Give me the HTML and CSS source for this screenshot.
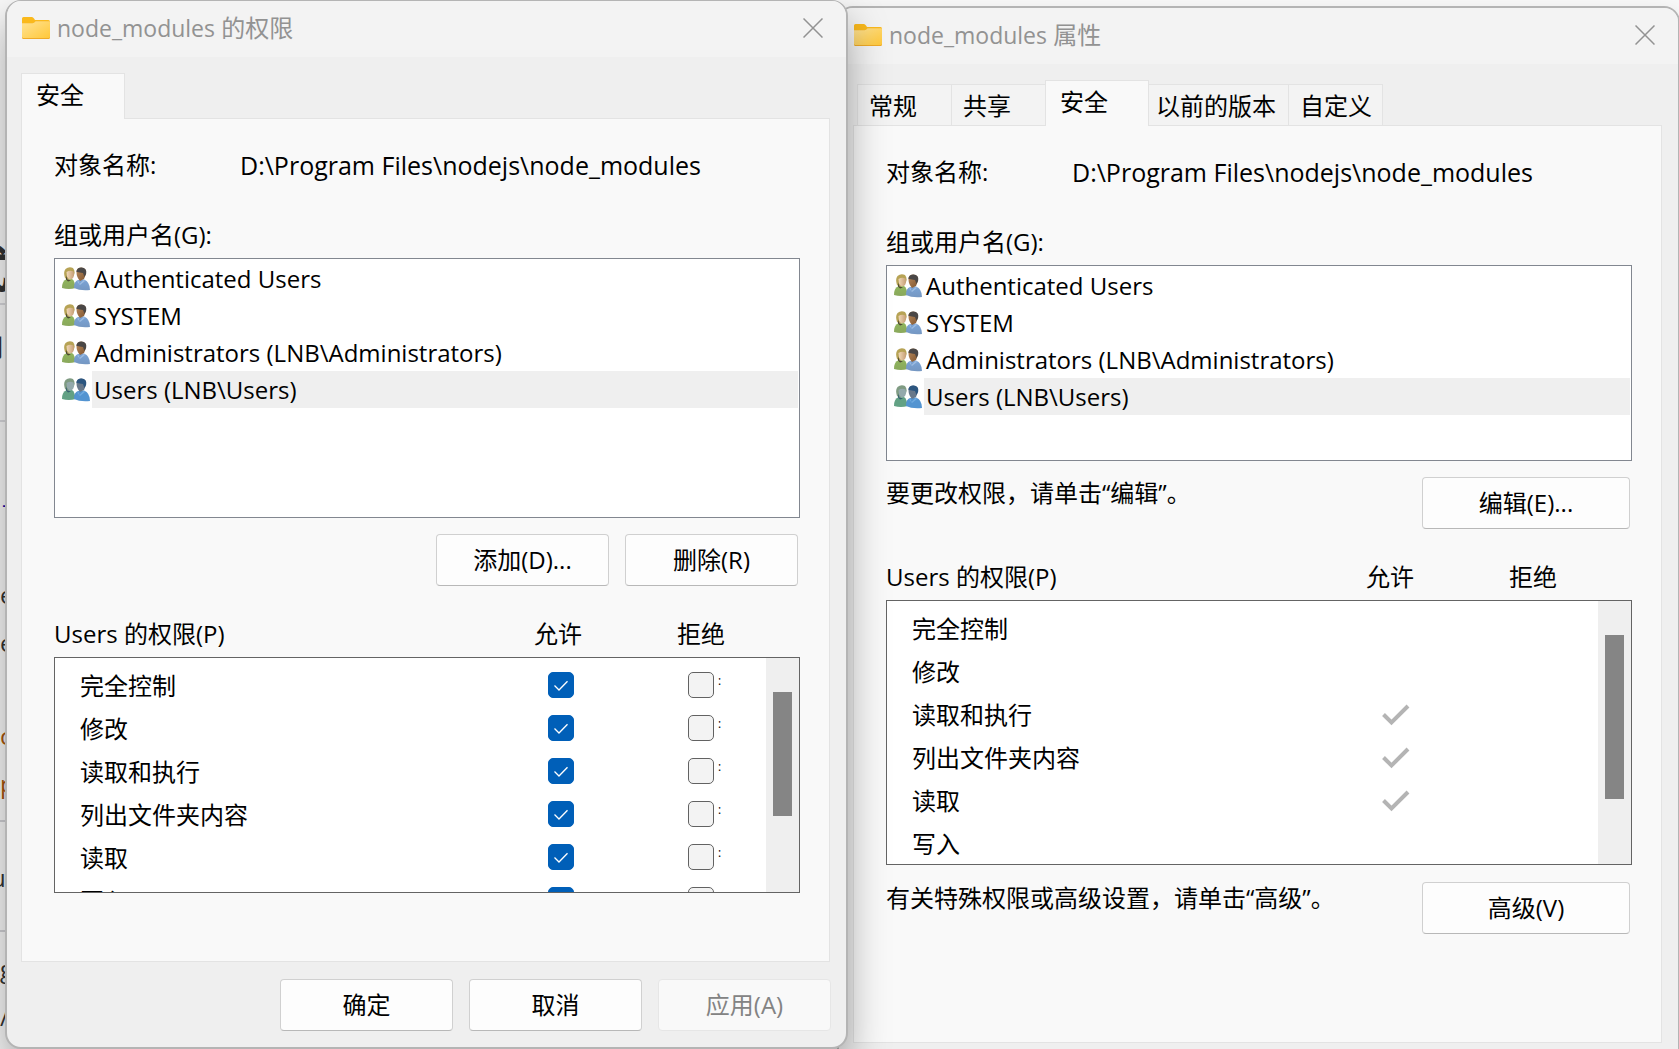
FILE: index.html
```html
<!DOCTYPE html>
<html lang="zh-CN">
<head>
<meta charset="utf-8">
<title>node_modules 的权限</title>
<link rel="stylesheet" href="styles.css">
</head>
<body>
<svg class="defs" aria-hidden="true">
  <defs>
    <linearGradient id="g-folder" x1="0" y1="0" x2="1" y2="1"><stop offset="0" stop-color="#ffe394"/><stop offset="1" stop-color="#ffc83a"/></linearGradient>
    <linearGradient id="g-green" x1="0" y1="0" x2="0" y2="1"><stop offset="0" stop-color="#8fb55c"/><stop offset="1" stop-color="#8aa85c"/></linearGradient>
    <linearGradient id="g-blue" x1="0" y1="0" x2="0" y2="1"><stop offset="0" stop-color="#7ba4d6"/><stop offset="1" stop-color="#7597c2"/></linearGradient>
    <linearGradient id="g-skin" x1="0" y1="0" x2="1" y2="0"><stop offset="0" stop-color="#f0d8b8"/><stop offset="1" stop-color="#c79f76"/></linearGradient>
    <linearGradient id="g-tan" x1="0" y1="0" x2="1" y2="1"><stop offset="0" stop-color="#b98a5c"/><stop offset="1" stop-color="#80552f"/></linearGradient>
  </defs>
  <symbol id="folder" viewBox="0 0 28 22">
    <path d="M0 1.5Q0 0 1.500 0H10Q11 0 12 1.500L13 3H26.500Q28 3 28 4.500V8H0Z" fill="#fab91c"/>
    <path d="M0 6.300H10.500Q11.500 6.300 12.300 5.500L13.600 4.200H28V20.500Q28 22 26.500 22H1.500Q0 22 0 20.500Z" fill="#efaa28"/>
    <path d="M0 6.300H10.500Q11.500 6.300 12.300 5.500L13.600 4.200H28V19.700Q28 21 26.500 21H1.500Q0 21 0 19.700Z" fill="url(#g-folder)"/>
  </symbol>
  <symbol id="people" viewBox="0 0 28 24">
    <path d="M0 21Q0 14 4 12.500L10 12Q13 14 13.500 21Q7 22.800 0 21Z" fill="url(#g-green)"/>
    <path d="M3 11Q1 5 3.500 2Q7-1 11 1Q13.500 4 12 8L10 11L6 13Z" fill="#b7a355"/>
    <path d="M4.500 5Q8 3 11.500 4.500Q13 9 10 12Q6.500 13 5 9.500Z" fill="url(#g-skin)"/>
    <path d="M4 8.500L5.500 12.500L9 13.500L6 14.500L4 12.500Z" fill="#4b4632"/>
    <path d="M12 21Q12 14 16 13L22 12.500Q28 15 28 23Q18 24 12 21Z" fill="url(#g-blue)"/>
    <path d="M14.500 5.500Q14 1 19 .600Q25 1 24 7L22 12L18 14Q14.500 10 14.500 5.500Z" fill="url(#g-tan)"/>
    <path d="M14.300 4.800Q15 .600 19.500.500Q25 1 24.200 6.500L22.500 10L21 6Q18 5.500 14.300 4.800Z" fill="#4a4746"/>
    <path d="M16 13L17.500 17L22 12.500L23 14L18 18L15.500 15Z" fill="#9dbce2"/>
  </symbol>
  <symbol id="people-selected" viewBox="0 0 28 24">
    <path d="M0 21Q0 14 4 12.500L10 12Q13 14 13.500 21Q7 22.800 0 21Z" fill="#62a184"/>
    <path d="M3 11Q1 5 3.500 2Q7-1 11 1Q13.500 4 12 8L10 11L6 13Z" fill="#7f9b82"/>
    <path d="M4.500 5Q8 3 11.500 4.500Q13 9 10 12Q6.500 13 5 9.500Z" fill="#94a9ac"/>
    <path d="M4 8.500L5.500 12.500L9 13.500L6 14.500L4 12.500Z" fill="#365f70"/>
    <path d="M12 21Q12 14 16 13L22 12.500Q28 15 28 23Q18 24 12 21Z" fill="#5394d1"/>
    <path d="M14.500 5.500Q14 1 19 .600Q25 1 24 7L22 12L18 14Q14.500 10 14.500 5.500Z" fill="#68788a"/>
    <path d="M14.300 4.800Q15 .600 19.500.500Q25 1 24.200 6.500L22.500 10L21 6Q18 5.500 14.300 4.800Z" fill="#2c5680"/>
    <path d="M16 13L17.500 17L22 12.500L23 14L18 18L15.500 15Z" fill="#71abe0"/>
  </symbol>
  <symbol id="close" viewBox="0 0 20 20"><path d="M.5.5L19.500 19.500M19.500.5L.5 19.500" stroke="#929292" stroke-width="1.500" fill="none"/></symbol>
  <symbol id="mark" viewBox="0 0 26 26"><path d="M6.500 13.500L11 18L19.500 9.300" stroke="#fff" stroke-width="1.300" fill="none"/></symbol>
  <symbol id="tick" viewBox="0 0 30 22"><path d="M3.500 10.500L11.500 18.500L28 2" stroke="#b4b4b4" stroke-width="4" fill="none"/></symbol>
</svg>

<main class="desktop">
  <div class="backdrop" aria-hidden="true">
    <span class="scrap scrap-title">式</span>
    <span class="scrap scrap-rule">们</span>
    <span class="scrap scrap-link">-</span>
    <span class="scrap">e</span>
    <span class="scrap scrap-line">e</span>
    <span class="scrap scrap-code">c</span>
    <span class="scrap scrap-code-next">p</span>
    <span class="scrap scrap-item">u</span>
    <span class="scrap scrap-last">g</span>
    <span class="scrap scrap-line">/</span>
  </div>

  <section class="window window-front" aria-labelledby="title-perm">
    <header class="titlebar">
      <svg class="folder"><use href="#folder"/></svg>
      <h1 class="title" id="title-perm"><span class="title-latin">node_modules</span> 的权限</h1>
      <button class="close" type="button" aria-label="关闭"><svg><use href="#close"/></svg></button>
    </header>
    <div class="body">
      <div class="tabs" role="tablist">
        <button class="tab tab-active" type="button" role="tab" aria-selected="true">安全</button>
      </div>
      <div class="panel">
        <div class="object"><span class="object-label">对象名称:</span><span class="path">D:\Program Files\nodejs\node_modules</span></div>
        <div class="caption" id="groups-1">组或用户名(G):</div>
        <ul class="users" aria-labelledby="groups-1">
          <li class="user"><svg><use href="#people"/></svg><span class="user-name">Authenticated Users</span></li>
          <li class="user"><svg><use href="#people"/></svg><span class="user-name">SYSTEM</span></li>
          <li class="user"><svg><use href="#people"/></svg><span class="user-name">Administrators (LNB\Administrators)</span></li>
          <li class="user user-selected"><svg><use href="#people-selected"/></svg><span class="user-name">Users (LNB\Users)</span></li>
        </ul>
        <div class="actions">
          <button class="button" type="button">添加(D)...</button>
          <button class="button" type="button">删除(R)</button>
        </div>
        <div class="perm-head"><span class="perm-title" id="perm-1">Users 的权限(P)</span><span class="head-allow">允许</span><span class="head-deny">拒绝</span></div>
        <div class="perm-box">
          <table class="perms" aria-labelledby="perm-1">
            <tbody>
              <tr><th scope="row">完全控制</th><td class="allow"><label class="check"><input type="checkbox" checked aria-label="允许 完全控制"><svg><use href="#mark"/></svg></label></td><td class="deny"><label class="check-row"><input type="checkbox" aria-label="拒绝 完全控制"><span>:</span></label></td></tr>
              <tr><th scope="row">修改</th><td class="allow"><label class="check"><input type="checkbox" checked aria-label="允许 修改"><svg><use href="#mark"/></svg></label></td><td class="deny"><label class="check-row"><input type="checkbox" aria-label="拒绝 修改"><span>:</span></label></td></tr>
              <tr><th scope="row">读取和执行</th><td class="allow"><label class="check"><input type="checkbox" checked aria-label="允许 读取和执行"><svg><use href="#mark"/></svg></label></td><td class="deny"><label class="check-row"><input type="checkbox" aria-label="拒绝 读取和执行"><span>:</span></label></td></tr>
              <tr><th scope="row">列出文件夹内容</th><td class="allow"><label class="check"><input type="checkbox" checked aria-label="允许 列出文件夹内容"><svg><use href="#mark"/></svg></label></td><td class="deny"><label class="check-row"><input type="checkbox" aria-label="拒绝 列出文件夹内容"><span>:</span></label></td></tr>
              <tr><th scope="row">读取</th><td class="allow"><label class="check"><input type="checkbox" checked aria-label="允许 读取"><svg><use href="#mark"/></svg></label></td><td class="deny"><label class="check-row"><input type="checkbox" aria-label="拒绝 读取"><span>:</span></label></td></tr>
              <tr><th scope="row">写入</th><td class="allow"><label class="check"><input type="checkbox" checked aria-label="允许 写入"><svg><use href="#mark"/></svg></label></td><td class="deny"><label class="check-row"><input type="checkbox" aria-label="拒绝 写入"><span>:</span></label></td></tr>
            </tbody>
          </table>
          <div class="track"><div class="thumb"></div></div>
        </div>
      </div>
      <footer class="footer">
        <button class="button" type="button">确定</button>
        <button class="button" type="button">取消</button>
        <button class="button" type="button" disabled>应用(A)</button>
      </footer>
    </div>
  </section>

  <section class="window window-back" aria-labelledby="title-prop">
    <header class="titlebar">
      <svg class="folder"><use href="#folder"/></svg>
      <h1 class="title" id="title-prop"><span class="title-latin">node_modules</span> 属性</h1>
      <button class="close" type="button" aria-label="关闭"><svg><use href="#close"/></svg></button>
    </header>
    <div class="body">
      <div class="tabs tabs-inset" role="tablist">
        <button class="tab tab-wide" type="button" role="tab">常规</button>
        <button class="tab tab-wide" type="button" role="tab">共享</button>
        <button class="tab tab-active" type="button" role="tab" aria-selected="true">安全</button>
        <button class="tab tab-snug" type="button" role="tab">以前的版本</button>
        <button class="tab" type="button" role="tab">自定义</button>
      </div>
      <div class="panel">
        <div class="object"><span class="object-label">对象名称:</span><span class="path">D:\Program Files\nodejs\node_modules</span></div>
        <div class="caption" id="groups-2">组或用户名(G):</div>
        <ul class="users users-short" aria-labelledby="groups-2">
          <li class="user"><svg><use href="#people"/></svg><span class="user-name">Authenticated Users</span></li>
          <li class="user"><svg><use href="#people"/></svg><span class="user-name">SYSTEM</span></li>
          <li class="user"><svg><use href="#people"/></svg><span class="user-name">Administrators (LNB\Administrators)</span></li>
          <li class="user user-selected"><svg><use href="#people-selected"/></svg><span class="user-name">Users (LNB\Users)</span></li>
        </ul>
        <div class="hint-row"><p class="hint">要更改权限，请单击“编辑”。</p><button class="button button-wide" type="button">编辑(E)...</button></div>
        <div class="perm-head"><span class="perm-title" id="perm-2">Users 的权限(P)</span><span class="head-allow">允许</span><span class="head-deny">拒绝</span></div>
        <div class="perm-box perm-box-tall">
          <table class="perms" aria-labelledby="perm-2">
            <tbody>
              <tr><th scope="row">完全控制</th><td class="allow"></td><td class="deny"></td></tr>
              <tr><th scope="row">修改</th><td class="allow"></td><td class="deny"></td></tr>
              <tr><th scope="row">读取和执行</th><td class="allow"><svg class="tick" role="img" aria-label="是"><use href="#tick"/></svg></td><td class="deny"></td></tr>
              <tr><th scope="row">列出文件夹内容</th><td class="allow"><svg class="tick" role="img" aria-label="是"><use href="#tick"/></svg></td><td class="deny"></td></tr>
              <tr><th scope="row">读取</th><td class="allow"><svg class="tick" role="img" aria-label="是"><use href="#tick"/></svg></td><td class="deny"></td></tr>
              <tr><th scope="row">写入</th><td class="allow"></td><td class="deny"></td></tr>
            </tbody>
          </table>
          <div class="track"><div class="thumb thumb-long"></div></div>
        </div>
        <div class="hint-row"><p class="hint">有关特殊权限或高级设置，请单击“高级”。</p><button class="button button-wide" type="button">高级(V)</button></div>
      </div>
    </div>
  </section>
</main>
</body>
</html>
```

FILE: styles.css
```css
* { box-sizing: border-box; }

body {
  margin: 0;
  background: #f8f8f8;
  color: #000;
  font-family: "Open Sans", "Noto Sans CJK SC", sans-serif;
  font-size: 24px;
  line-height: 32px;
}

button, input { font: inherit; color: inherit; margin: 0; }

.defs { position: absolute; width: 0; height: 0; }

.path { font-size: 25px; }
.title-latin { font-size: 23px; }

/* Desktop: two overlapping windows over a document */
.desktop {
  position: relative;
  display: grid;
  grid-template-columns: 1fr 1fr;
  align-items: start;
  height: 100vh;
  min-height: 1049px;
  padding-left: 5px;
  overflow: hidden;
}

.backdrop {
  position: absolute;
  left: 0;
  top: 0;
  display: flex;
  flex-direction: column;
  width: 24px;
  padding-top: 242px;
  color: #333;
}
.scrap { height: 32px; }
.scrap-title { height: 63px; margin-left: -38px; font-size: 48px; font-weight: 700; line-height: 54px; border-bottom: 2px solid #d8d8dc; }
.scrap-rule { height: 117px; margin-left: -21px; padding-top: 26px; border-bottom: 2px solid #d8d8dc; }
.scrap-link { height: 157px; padding: 66px 0 0 2px; color: #1a0dab; }
.scrap-line { margin-top: 16px; }
.scrap-code { margin-top: 61px; color: #a8560a; }
.scrap-code-next { margin-top: 16px; color: #a8560a; }
.scrap-item { height: 74px; margin: 20px 0 0 -9px; padding-top: 40px; border-top: 2px solid #d0d0d4; }
.scrap-last { height: 55px; margin-top: 36px; padding-top: 21px; border-top: 2px solid #d0d0d4; }

.window {
  position: relative;
  display: flex;
  flex-direction: column;
  border: 2px solid #b4b4b4;
  border-radius: 16px;
  background: #efefef;
  overflow: hidden;
}
.window-front {
  z-index: 2;
  height: 100%;
  margin-right: -6px;
  border-top-width: 1px;
  box-shadow: 0 20px 40px rgba(0, 0, 0, .34);
}
.window-back {
  z-index: 1;
  height: calc(100% + 75px);
  margin: 6px -1px 0 -5px;
  padding-bottom: 85px;
  box-shadow: 0 10px 24px rgba(0, 0, 0, .14);
}

.titlebar {
  display: flex;
  flex: none;
  align-items: center;
  height: 56px;
  padding: 0 23px 2px 15px;
  background: #f3f3f3;
}
.folder { width: 28px; height: 22px; margin-right: 7px; }
.title { flex: 1; margin: 0; color: #929292; font-size: 24px; font-weight: 400; line-height: 32px; }
.close { display: flex; padding: 0; border: 0; background: none; }
.close svg { width: 20px; height: 20px; }

.body { display: flex; flex: 1; flex-direction: column; min-height: 0; padding: 16px 15px 0 14px; }

.tabs { display: flex; align-items: flex-end; margin-bottom: -1px; }
.tabs-inset { padding-left: 4px; }
.tab {
  position: relative;
  height: 42px;
  padding: 1px 10px 0 11px;
  border: 1px solid #e3e3e3;
  margin-right: -1px;
  background: #f3f3f3;
  line-height: 32px;
  text-align: left;
}
.tab-wide { width: 95px; }
.tab-snug { padding-left: 7px; padding-right: 12px; }
.tab-active {
  width: 104px;
  height: 46px;
  padding: 0 14px 4px;
  border-bottom: 0;
  background: #f9f9f9;
  z-index: 1;
}

.panel {
  flex: 1;
  min-height: 0;
  margin-right: 1px;
  padding: 30px 29px 0 32px;
  border: 1px solid #e3e3e3;
  background: #f9f9f9;
}

.object { display: flex; margin-bottom: 38px; }
.object-label { width: 186px; }
.caption { margin-bottom: 7px; }

.users {
  height: 260px;
  margin: 0 0 16px;
  padding: 1px;
  border: 1px solid #828790;
  background: #fff;
  list-style: none;
}
.users-short { height: 196px; }
.user { display: flex; align-items: center; gap: 2px; height: 37px; padding-left: 6px; }
.user svg { flex: none; width: 28px; height: 24px; }
.user-name { flex: 1; height: 37px; padding-left: 2px; line-height: 38px; }
.user-selected .user-name { background: #efefef; }

.actions { display: flex; justify-content: flex-end; gap: 16px; margin-bottom: 32px; padding-right: 2px; }
.button {
  width: 173px;
  height: 52px;
  padding: 0;
  border: 1px solid #d0d0d0;
  border-bottom-color: #b8b8b8;
  border-radius: 4px;
  background: #fdfdfd;
}
.button-wide { width: 208px; }
.button:disabled { border-color: #e6e6e6; background: #f9f9f9; color: #838383; }

.hint-row { display: flex; align-items: flex-start; justify-content: space-between; margin-bottom: 32px; padding-right: 2px; }
.hint { margin: 0; }

.perm-head { display: flex; margin-bottom: 7px; }
.perm-title { flex: 1; }
.head-allow { width: 143px; }
.head-deny { width: 123px; }

.perm-box {
  display: flex;
  height: 236px;
  margin-bottom: 17px;
  border: 1px solid #646464;
  background: #fff;
  overflow: hidden;
}
.perm-box-tall { height: 265px; }
.perms { flex: 1; height: max-content; margin-top: 5px; border-collapse: collapse; table-layout: fixed; }
.perms tr { height: 43px; }
.perms th { padding: 3px 0 0 25px; font-weight: 400; text-align: left; }
.perms td { padding: 0; vertical-align: middle; }
.allow { width: 140px; }
.deny { width: 78px; }

.check { display: grid; width: 26px; }
.check input, .check svg { grid-area: 1 / 1; }
.check svg { position: relative; width: 26px; height: 26px; pointer-events: none; }
.check-row { display: flex; gap: 4px; height: 26px; font-size: 12px; line-height: 18px; }
.perms input {
  appearance: none;
  width: 26px;
  height: 26px;
  border: 1px solid #626262;
  border-radius: 5px;
  background: #f3f3f3;
}
.perms input:checked { border-color: #005fb8; background: #005fb8; }
.tick { display: block; width: 30px; height: 22px; margin-top: 2px; }

.track { flex: none; width: 33px; padding: 34px 7px 0; background: #efefef; }
.thumb { height: 124px; background: #858585; }
.thumb-long { height: 164px; }

.footer { display: flex; flex: none; justify-content: flex-end; gap: 16px; padding: 17px 0 16px; }
```
